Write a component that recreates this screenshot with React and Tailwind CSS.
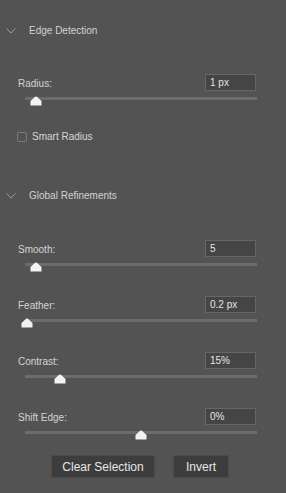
import React from "react";

const font = { fontFamily: '"Liberation Sans", Arial, sans-serif' };

function Chevron() {
  return (
    <svg width="10" height="6" viewBox="0 0 10 6" className="block">
      <polyline points="0.5,0.5 5,5 9.5,0.5" fill="none" stroke="#9c9c9c" strokeWidth="1" />
    </svg>
  );
}

function Thumb() {
  return (
    <svg width="12" height="10" viewBox="0 0 12 10" className="block">
      <path d="M6 0.5 C6.6 0.5 7 0.8 7.5 1.3 L11.5 5 L11.5 9.5 L0.5 9.5 L0.5 5 L4.5 1.3 C5 0.8 5.4 0.5 6 0.5 Z" fill="#f2f2f2" />
    </svg>
  );
}

function SectionHeader({ title, className }) {
  return (
    <div className={`flex items-center h-3 ${className}`}>
      <div className="w-[29px] pl-[6px] flex items-center">
        <Chevron />
      </div>
      <span className="text-[10px] leading-3 text-[#d2d2d2]">{title}</span>
    </div>
  );
}

function SliderField({ label, value, offset, className = "" }) {
  return (
    <div className={className}>
      <div className="flex items-center justify-between pl-[18px] pr-[30px]">
        <span className="text-[10px] leading-3 text-[#d4d4d4] mt-[2px]">{label}</span>
        <div className="w-[51px] h-[17px] bg-[#454545] border border-[#666666] flex items-center pl-[4px]">
          <span className="text-[10px] leading-3 text-[#e4e4e4]">{value}</span>
        </div>
      </div>
      <div className="relative ml-[25px] w-[232px] h-[3px] mt-[6px] bg-[#6c6c6c]">
        <div className="absolute top-[-1px]" style={{ left: offset - 6 }}>
          <Thumb />
        </div>
      </div>
    </div>
  );
}

export default function App() {
  return (
    <div className="w-[286px] h-[493px] bg-[#535353] overflow-hidden" style={font}>
      <SectionHeader title="Edge Detection" className="pt-0 mt-[25px]" />

      <SliderField label="Radius:" value="1 px" offset={11} className="mt-[37px]" />

      <div className="flex items-center mt-[32px] pl-[17px] h-[10px]">
        <div className="w-[10px] h-[10px] rounded-[2px] border border-[#7a7a7a]" />
        <span className="ml-[5px] text-[10px] leading-3 text-[#d6d6d6]">Smart Radius</span>
      </div>

      <SectionHeader title="Global Refinements" className="mt-[48px]" />

      <SliderField label="Smooth:" value="5" offset={11} className="mt-[38px]" />
      <SliderField label="Feather:" value="0.2 px" offset={2} className="mt-[30px]" />
      <SliderField label="Contrast:" value="15%" offset={34.5} className="mt-[30px]" />
      <SliderField label="Shift Edge:" value="0%" offset={116} className="mt-[30px]" />

      <div className="flex mt-[21px] pl-[51px] gap-[18px]">
        <button className="w-[104px] h-[23px] bg-[#3d3d3d] border border-[#4a4a4a] rounded-[2px] text-[12px] text-[#e6e6e6]">
          Clear Selection
        </button>
        <button className="w-[56px] h-[23px] bg-[#3d3d3d] border border-[#4a4a4a] rounded-[2px] text-[12px] text-[#e6e6e6]">
          Invert
        </button>
      </div>
    </div>
  );
}
